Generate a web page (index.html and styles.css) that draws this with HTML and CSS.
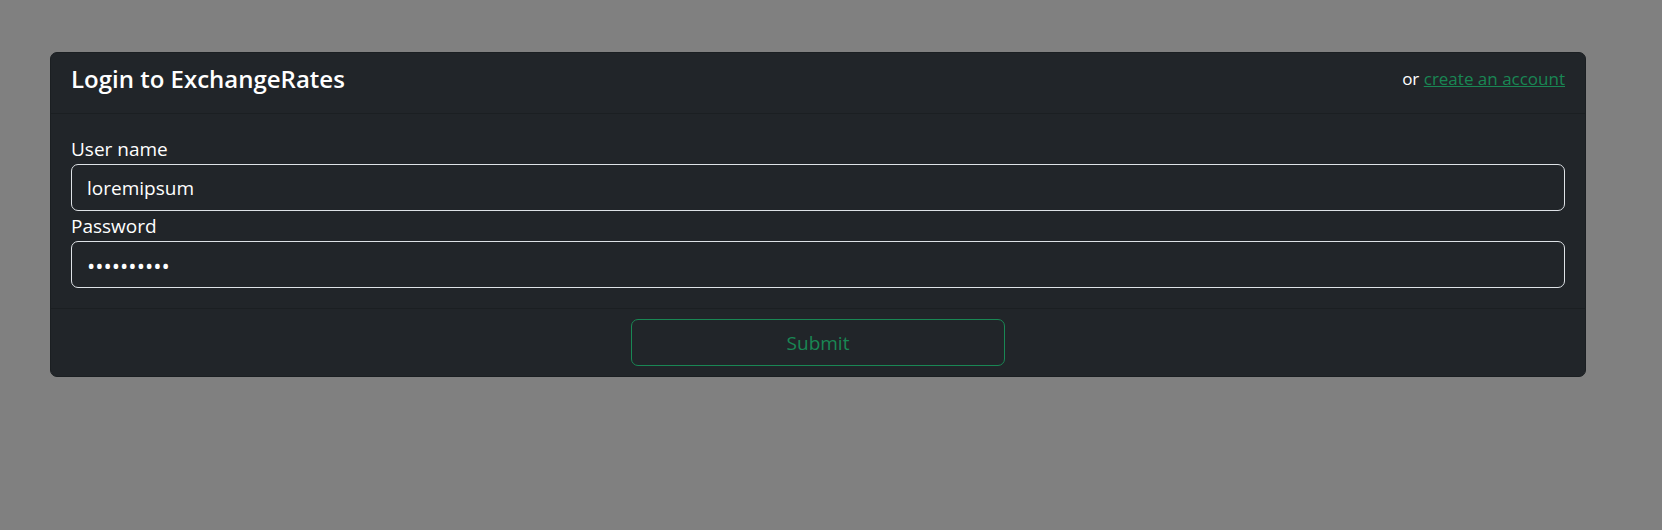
FILE: index.html
```html
<!DOCTYPE html>
<html lang="en">
<head>
<meta charset="utf-8">
<meta name="viewport" content="width=device-width, initial-scale=1">
<title>Login to ExchangeRates</title>
<link rel="stylesheet" href="styles.css">
</head>
<body>
<main class="page">
  <form class="card">
    <header class="card-header">
      <h1 class="title">Login to ExchangeRates</h1>
      <p class="alternative">or <a class="link" href="#register">create an account</a></p>
    </header>
    <div class="card-body">
      <label class="label" for="username">User name</label>
      <input class="control" id="username" type="text" value="loremipsum">
      <label class="label" for="password">Password</label>
      <input class="control control-password" id="password" type="password" value="loremipsum">
    </div>
    <footer class="card-footer">
      <button class="submit" type="submit">Submit</button>
    </footer>
  </form>
</main>
</body>
</html>
```

FILE: styles.css
```css
* { box-sizing: border-box; }

body {
  margin: 0;
  background: #808080;
  color: #fff;
  font-family: "Segoe UI", "Open Sans", "Noto Sans", sans-serif;
  font-size: 19px;
  line-height: 30px;
}

.page { padding: 52px 76px 52px 50px; }

.card {
  background: #212529;
  border: 1px solid #1b1f22;
  border-radius: 7px;
}

.card-header {
  display: flex;
  justify-content: space-between;
  align-items: flex-start;
  padding: 10px 20px 18px;
  border-bottom: 1px solid #1b1f22;
}

.title {
  margin: 0;
  font-size: 24px;
  font-weight: 600;
  line-height: 32px;
}

.alternative {
  margin: 0;
  font-size: 17px;
  line-height: 32px;
}

.link { color: #198754; }

.card-body {
  display: flex;
  flex-direction: column;
  padding: 20px;
}

.label { line-height: 30px; }

.control {
  width: 100%;
  height: 47px;
  padding: 8px 15px;
  border: 1px solid #dee2e6;
  border-radius: 7px;
  background: #212529;
  color: #fff;
  font: inherit;
}

.control-password { font-size: 22px; }

.card-footer {
  display: flex;
  justify-content: center;
  padding: 10px 20px;
  border-top: 1px solid #1b1f22;
}

.submit {
  width: 25%;
  height: 47px;
  border: 1px solid #198754;
  border-radius: 7px;
  background: transparent;
  color: #198754;
  font: inherit;
}
```
